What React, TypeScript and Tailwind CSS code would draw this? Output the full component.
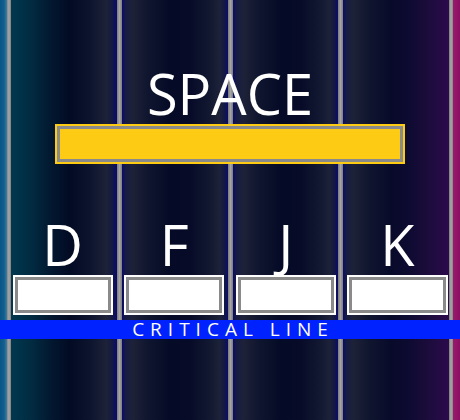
import React from "react";

const Sep = ({ w }: { w: string }) => (
  <div className={`${w} h-full bg-[linear-gradient(90deg,#7c7c7c,#a4a4a4_50%,#7c7c7c)]`} />
);

export default function App() {
  const keys = ["D", "F", "J", "K"];
  return (
    <div className="relative w-[460px] h-[420px] overflow-hidden bg-[#060a24] font-['Open_Sans',sans-serif]">
      {/* highway background */}
      <div className="absolute inset-0 flex">
        <div className="w-[7px] h-full bg-[linear-gradient(90deg,#0a5486,#12608f_60%,#3f7ea3)]" />
        <div className="w-[4px] h-full bg-[linear-gradient(90deg,#858585,#a8a8a8_50%,#7c7c7c)]" />
        <div className="flex-1 h-full bg-[linear-gradient(90deg,#00384f_0%,#012c42_18%,#02162e_40%,#030b24_55%,#0d142e_75%,#1d2238_90%,#141a40_95%,#0a0a6e_100%)]" />
        <Sep w="w-[5px]" />
        <div className="flex-1 h-full bg-[linear-gradient(90deg,#0a0a6e_0%,#161b44_3%,#1d2238_10%,#10152f_25%,#050a26_45%,#070b28_65%,#141a32_85%,#1d2238_92%,#121844_97%,#0a0a6e_100%)]" />
        <Sep w="w-[5px]" />
        <div className="flex-1 h-full bg-[linear-gradient(90deg,#0a0a6e_0%,#161b44_3%,#1d2238_10%,#10152f_25%,#050a26_45%,#070b28_65%,#141a32_85%,#1d2238_92%,#121844_97%,#0a0a6e_100%)]" />
        <Sep w="w-[5px]" />
        <div className="flex-1 h-full bg-[linear-gradient(90deg,#0a0a6e_0%,#161b44_3%,#1d2238_10%,#10152f_25%,#080a2a_45%,#0c0a30_60%,#1a0c3a_78%,#250b45_92%,#2c0a4c_100%)]" />
        <div className="w-[4px] h-full bg-[linear-gradient(90deg,#7c7c7c,#a8a8a8_50%,#858585)]" />
        <div className="w-[7px] h-full bg-[linear-gradient(90deg,#9a1a6e,#8a1062)]" />
      </div>

      {/* content */}
      <div className="relative flex flex-col items-center pt-[64px]">
        <div className="text-white text-[56px] leading-[58px]">SPACE</div>
        <div className="mt-[2px] w-[350px] h-[40px] bg-[#fdcb14] p-[2px]">
          <div className="h-full border-[3px] border-[#8a8a8a] bg-[#fdcb14]" />
        </div>

        <div className="mt-[51px] w-[435px] grid grid-cols-4 gap-x-[11.67px]">
          {keys.map((k) => (
            <div key={k} className="flex flex-col items-center">
              <div className="text-white text-[56px] leading-[58px]">{k}</div>
              <div className="mt-[2px] w-full h-[40px] bg-white p-[2px]">
                <div className="h-full border-[3px] border-[#8a8a8a] bg-white" />
              </div>
            </div>
          ))}
        </div>

        <div className="mt-[5px] self-stretch h-[19px] bg-[#0022ff] flex items-center justify-center">
          <span className="pl-[6px] text-white text-[19px] leading-[19px] tracking-[6px]">CRITICAL LINE</span>
        </div>
      </div>
    </div>
  );
}
